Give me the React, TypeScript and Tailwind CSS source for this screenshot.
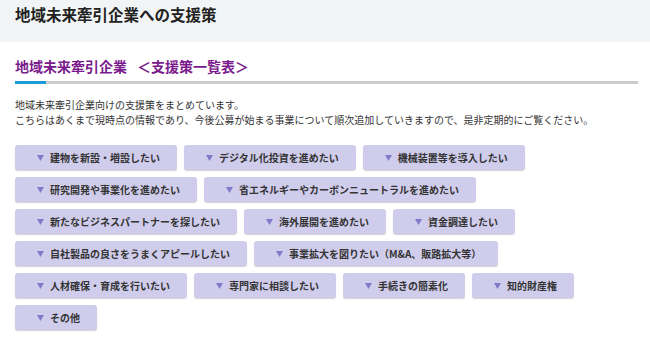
import React from "react";

const items = [
  "建物を新設・増設したい",
  "デジタル化投資を進めたい",
  "機械装置等を導入したい",
  "研究開発や事業化を進めたい",
  "省エネルギーやカーボンニュートラルを進めたい",
  "新たなビジネスパートナーを探したい",
  "海外展開を進めたい",
  "資金調達したい",
  "自社製品の良さをうまくアピールしたい",
  "事業拡大を図りたい（M&A、販路拡大等）",
  "人材確保・育成を行いたい",
  "専門家に相談したい",
  "手続きの簡素化",
  "知的財産権",
  "その他",
];

export default function App() {
  return (
    <div
      className="w-[650px] h-[340px] bg-white overflow-hidden text-[#333]"
      style={{ fontFamily: '"Noto Sans CJK JP", "Noto Sans", sans-serif' }}
    >
      <div className="h-[42px] bg-[#f2f5f5] pl-[15px] pt-[3px]">
        <h1 className="text-[15.5px] leading-[22px] font-bold text-[#222]">
          地域未来牽引企業への支援策
        </h1>
      </div>
      <div className="pl-[15px] pr-[12px]">
        <h2 className="mt-[14px] text-[14px] leading-[20px] font-bold text-[#7a1a8c] pb-[5px] flex">
          <span>地域未来牽引企業</span>
          <span className="inline-block w-[10px]" />
          <span>＜支援策一覧表＞</span>
        </h2>
        <div className="h-[3px] bg-[#cccccc] flex">
          <div className="w-[31px] h-full bg-[#1a9bd7]" />
        </div>
        <div className="mt-[13px] text-[10px] leading-[15px] text-[#333]">
          <p>地域未来牽引企業向けの支援策をまとめています。</p>
          <p>
            こちらはあくまで現時点の情報であり、今後公募が始まる事業について順次追加していきますので、是非定期的にご覧ください。
          </p>
        </div>
        <div className="mt-[18px] flex flex-wrap gap-[7px]">
          {items.map((t) => (
            <div
              key={t}
              className="h-[25px] flex items-center pl-[22px] pr-[17px] bg-[#d0cdec] rounded-[3px] shadow-[0_1px_1px_rgba(0,0,0,0.18)] text-[10px] font-bold text-[#333] whitespace-nowrap"
            >
              <svg width="7" height="6" viewBox="0 0 7 6" className="mr-[6px] shrink-0">
                <polygon points="0,0 7,0 3.5,6" fill="#7f7bc9" />
              </svg>
              <span>{t}</span>
            </div>
          ))}
        </div>
      </div>
    </div>
  );
}
